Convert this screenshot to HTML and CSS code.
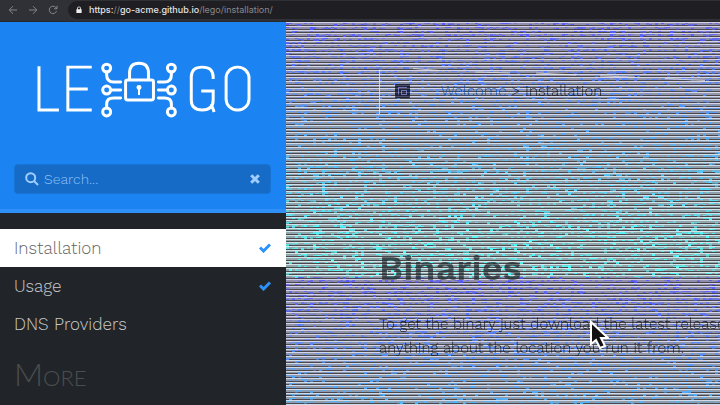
FILE: index.html
```html
<!DOCTYPE html>
<html lang="en">
<head>
<meta charset="utf-8">
<title>Installation :: Let's Encrypt client and ACME library</title>
<link rel="stylesheet" href="styles.css">
</head>
<body>
<header class="toolbar">
  <button class="nav-button" type="button" aria-label="Back"><svg viewBox="0 0 10 10"><path d="M9 5H1.500M5 1.200L1.200 5L5 8.800"/></svg></button>
  <button class="nav-button" type="button" aria-label="Forward"><svg viewBox="0 0 10 10"><path d="M1 5h7.500M5 1.200L8.800 5L5 8.800"/></svg></button>
  <button class="nav-button" type="button" aria-label="Reload"><svg viewBox="0 0 10 10"><path d="M8.500 6A3.700 3.700 0 1 1 7.800 2.500L9 3.700M9 .8v3H6"/></svg></button>
  <div class="address">
    <svg class="lock" viewBox="0 0 8 9"><path d="M1.500 4V3a2.500 2.500 0 0 1 5 0v1H7.500v5h-7V4zM2.600 4h2.800V3a1.400 1.400 0 0 0-2.800 0z"/></svg>
    <span class="url"><b>https:</b>//<b>go-acme.github.io</b>/lego/installation/</span>
  </div>
</header>
<div class="layout">
  <aside class="sidebar">
    <div class="brand">
      <a class="logo" href="#" aria-label="Lego">
        <svg viewBox="0 0 216 60">
          <g class="letters"><path d="M3 2v44h20M56 3H32v43h24M32 25h20"/><path d="M178 15v-2q0-10-11-10t-11 10v23q0 10 11 10 11 0 11-10V27h-12M176 40l3 8"/><rect x="191" y="3" width="23" height="43" rx="11"/></g>
          <g class="circuit">
            <circle cx="71" cy="4" r="4"/><path d="M71 8v3q0 7 7 7h7"/><circle cx="71" cy="26" r="4"/><path d="M75 26h10"/><circle cx="71" cy="48" r="4"/><path d="M71 44v-4q0-6 7-6h7"/>
            <circle cx="136" cy="4" r="4"/><path d="M136 8v3q0 7-7 7h-6"/><circle cx="136" cy="26" r="4"/><path d="M132 26h-9"/><circle cx="136" cy="48" r="4"/><path d="M136 44v-4q0-6-7-6h-6"/>
            <rect x="90" y="16" width="28" height="20" rx="2"/><path d="M94 15V9q0-10 9.500-10T113 9v6"/>
          </g>
          <circle class="keyhole" cx="103.500" cy="23.500" r="2.500"/><path class="keyhole" d="M102.500 23h2v8h-2z"/>
        </svg>
      </a>
      <form class="search">
        <svg class="glass" viewBox="0 0 14 14"><circle cx="5.700" cy="5.700" r="4.500"/><path d="M9 9l4 4"/></svg>
        <input class="search-input" type="text" aria-label="Search" placeholder="Search...">
        <button class="clear" type="reset" aria-label="Clear"><svg viewBox="0 0 10 10"><path d="M1.200 1.200l7.600 7.600M8.800 1.200L1.200 8.800"/></svg></button>
      </form>
    </div>
    <nav class="menu">
      <a class="item current" href="#">Installation<svg class="check" viewBox="0 0 12 10"><path d="M1 4.500l3.500 3.500L11 1.500"/></svg></a>
      <a class="item" href="#">Usage<svg class="check" viewBox="0 0 12 10"><path d="M1 4.500l3.500 3.500L11 1.500"/></svg></a>
      <a class="item" href="#">DNS Providers</a>
      <h3 class="more">More</h3>
    </nav>
  </aside>
  <main class="page">
    <canvas class="noise" id="noise"></canvas>
    <div class="topbar">
      <svg class="toc" viewBox="0 0 15 14"><rect width="15" height="14" rx="1"/><path d="M3 3.500h9M3.500 3.500v7M6 6.500h6M6 10.500h6M6.500 6.500v4M11.500 6.500v4"/></svg>
      <div class="crumbs"><a href="#">Welcome</a> &gt; Installation</div>
    </div>
    <article class="content">
      <h2>Binaries</h2>
      <p>To get the binary just download the latest release for your OS/Arch from the releases page<br>anything about the location you run it from.</p>
    </article>
    <svg class="streaks" viewBox="0 0 434 382"><path d="M93.500 48v44M127 46.500l27 2M189 50l35 1M250 51l40 2M314 54l35 1M379 56.500l40 2"/></svg>
  </main>
</div>
<svg class="pointer" viewBox="0 0 20 30"><path d="M2 2v22l5-4 4 8 5-2-4-8h7z"/></svg>
<script src="noise.js"></script>
</body>
</html>
```
FILE: styles.css
```css
* { box-sizing: border-box; }
body { margin: 0; height: 100vh; overflow: hidden; display: flex; flex-direction: column; background: #212529; font-family: "Work Sans", "Open Sans", sans-serif; font-weight: 300; }
svg { display: block; fill: none; }
button { border: 0; padding: 0; background: none; }
a { text-decoration: none; }
.toolbar { flex: none; height: 22px; display: flex; align-items: center; gap: 10px; padding: 0 0 2px 8px; background: #303136; border-bottom: 1px solid #26282c; }
.nav-button { width: 10px; height: 10px; }
.nav-button svg { width: 10px; height: 10px; stroke: #85868a; stroke-width: 1; }
.address { flex: 1; display: flex; align-items: center; gap: 7px; height: 18px; padding-left: 8px; border-radius: 9px 0 0 9px; background: #1f1e23; }
.lock { width: 6px; height: 7px; fill: #eee; fill-rule: evenodd; }
.url { font: 9px/18px Inter, sans-serif; color: #88898d; }
.url b { font-weight: 500; color: #e4e4e6; }
.layout { flex: 1; min-height: 0; display: grid; grid-template-columns: 286px 1fr; }
.sidebar { background: #212529; overflow: hidden; }
.brand { padding: 42px 15px 15px 14px; background: #1b84f2; border-bottom: 4px solid #2f91f7; }
.logo { display: block; padding: 0 20px 0 22px; }
.logo svg { width: 100%; height: 60px; overflow: visible; }
.letters { stroke: #fff; stroke-width: 3; }
.circuit { stroke: #fff; stroke-width: 3; stroke-linecap: round; }
.keyhole { fill: #fff; }
.search { display: flex; align-items: center; height: 30px; margin-top: 40px; padding: 0 10px; border: 1px solid #1874d4; border-radius: 4px; background: #156bc6; }
.glass { width: 14px; height: 14px; stroke: #a2ceff; stroke-width: 2; }
.search-input { flex: 1; min-width: 0; padding: 0 5px; border: 0; outline: 0; background: none; font: 300 14px "Work Sans", "Open Sans", sans-serif; color: #8cc2fb; }
.search-input::placeholder { color: #8cc2fb; opacity: 1; }
.clear svg { width: 10px; height: 10px; stroke: #a2ceff; stroke-width: 3; }
.menu { padding-top: 16px; }
.item { display: flex; align-items: center; justify-content: space-between; height: 38px; padding: 0 15px 0 14px; font-size: 17px; color: #c8cacc; }
.current { background: #fff; color: #666; }
.check { width: 12px; height: 10px; stroke: #2c91f8; stroke-width: 3; }
.more { margin: 8px 14px 0; font: 300 32px/46px Lato, sans-serif; font-variant: small-caps; color: #4b4d4f; }
.page { position: relative; overflow: hidden; background: #aaa8ab; }
.noise { position: absolute; inset: 0; width: 100%; height: 100%; }
.topbar { position: relative; display: flex; align-items: center; gap: 31px; padding: 58px 0 0 109px; }
.toc { width: 15px; height: 14px; fill: #20233c; stroke: #6f75b5; stroke-width: 1; }
.toc rect { stroke: none; }
.crumbs { font-size: 15px; line-height: 22px; color: #17181f; white-space: nowrap; }
.crumbs a { color: #1650a8; }
.content { position: relative; padding: 139px 0 0 93px; color: #17181f; white-space: nowrap; }
.content h2 { margin: 0; font: 600 36px/54px "Work Sans", Inter, sans-serif; color: #2c3438; opacity: .85; }
.content p { margin: 17px 0 0; font-size: 15px; line-height: 24px; }
.page::after { content: ""; position: absolute; inset: 0; background: repeating-linear-gradient(#fff3 0 1px, #fff0 1px 4px, #fff3 4px 5px, #fff0 5px 8px, #fff3 8px 9px, #fff0 9px 11px); }
.streaks { position: absolute; top: 0; left: 0; width: 434px; height: 382px; stroke: #e5e4e5; stroke-width: 1; opacity: .8; }
.pointer { position: absolute; left: 589px; top: 320px; width: 20px; height: 30px; fill: #111; stroke: #fff; stroke-width: 2; }
```
FILE: noise.js
```js
const canvas = document.getElementById("noise");
const width = canvas.width = canvas.clientWidth;
const height = canvas.height = canvas.clientHeight;
const context = canvas.getContext("2d");
let seed = 71;
function random() {
  seed = (seed * 1664525 + 1013904223) >>> 0;
  return seed / 4294967296;
}
// Each band of interference drifts from violet through sky blue to cyan.
function tint(y) {
  const t = y < 255 ? y / 255 : (y - 255) / 255;
  return `rgb(${85 - 5 * t}, ${Math.min(255, 85 + 200 * t)}, 255)`;
}
// Three scan lines share eleven rows: L is lit, G is grey, D is dark.
const pattern = "LGGDLGGDLGD";
const shades = { L: "#dcdae0", G: "#9a989d", D: "#4b484d" };
for (let y = 0; y < height; y++) {
  const kind = pattern[y % 11];
  context.globalAlpha = 1;
  context.fillStyle = shades[kind];
  context.fillRect(0, y, width, 1);
  if (kind !== "D") {
    context.globalAlpha = 0.15;
    context.fillStyle = tint(y);
    context.fillRect(0, y, width, 1);
  }
}
for (let y = 0; y < height; y++) {
  if (pattern[y % 11] !== "G") continue;
  context.fillStyle = tint(y);
  for (let x = 0; x < width; x += 3) {
    if (random() < 0.3) {
      context.globalAlpha = 0.4 + random() * 0.6;
      context.fillRect(x, y, 3, random() < 0.35 ? 2 : 1);
    }
  }
}
```
